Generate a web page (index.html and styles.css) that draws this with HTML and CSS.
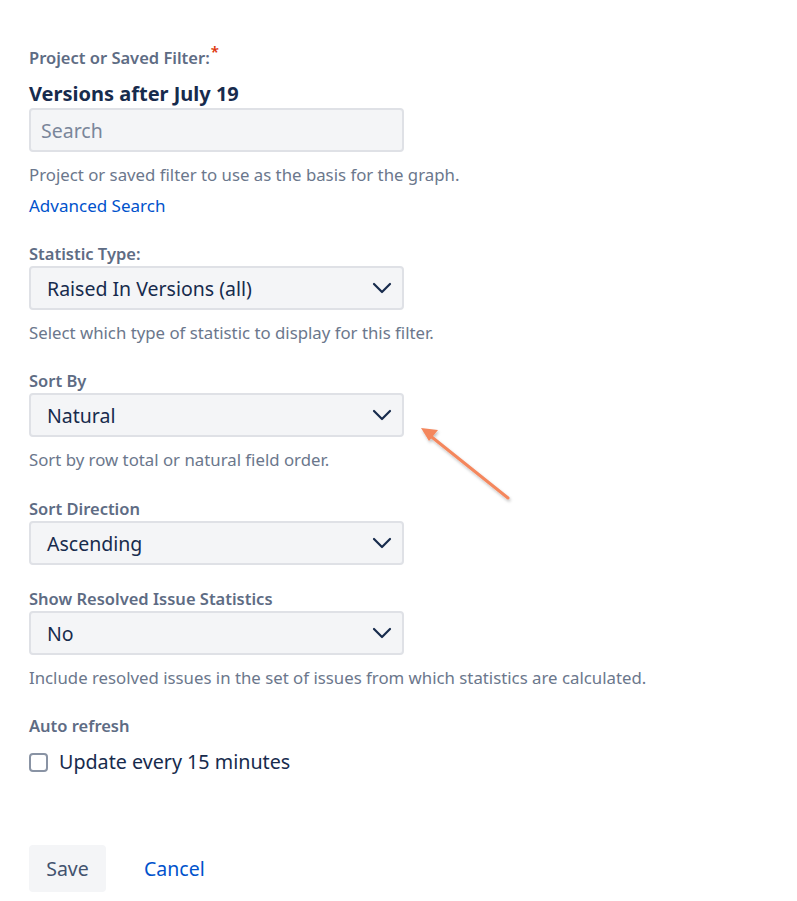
FILE: index.html
```html
<!DOCTYPE html>
<html>
<head>
<meta charset="utf-8">
<link rel="stylesheet" href="styles.css">
</head>
<body>
<form class="form">
  <div class="field">
    <label class="label">Project or Saved Filter:<span class="req">*</span></label>
    <div class="filter-name">Versions after July 19</div>
    <div class="control input"><span class="placeholder">Search</span></div>
    <div class="help">Project or saved filter to use as the basis for the graph.</div>
    <a class="link" href="#">Advanced Search</a>
  </div>

  <div class="field">
    <label class="label">Statistic Type:</label>
    <div class="control select"><span>Raised In Versions (all)</span><svg class="chev" viewBox="0 0 20 12"><path d="M2 2 L10 10 L18 2" /></svg></div>
    <div class="help">Select which type of statistic to display for this filter.</div>
  </div>

  <div class="field wide">
    <label class="label">Sort By</label>
    <div class="control select"><span>Natural</span><svg class="chev" viewBox="0 0 20 12"><path d="M2 2 L10 10 L18 2" /></svg></div>
    <div class="help">Sort by row total or natural field order.</div>
  </div>

  <div class="field short">
    <label class="label">Sort Direction</label>
    <div class="control select"><span>Ascending</span><svg class="chev" viewBox="0 0 20 12"><path d="M2 2 L10 10 L18 2" /></svg></div>
  </div>

  <div class="field">
    <label class="label">Show Resolved Issue Statistics</label>
    <div class="control select"><span>No</span><svg class="chev" viewBox="0 0 20 12"><path d="M2 2 L10 10 L18 2" /></svg></div>
    <div class="help">Include resolved issues in the set of issues from which statistics are calculated.</div>
  </div>

  <div class="field">
    <label class="label">Auto refresh</label>
    <div class="check-row"><span class="checkbox"></span><span>Update every 15 minutes</span></div>
  </div>

  <div class="buttons">
    <button type="button" class="btn">Save</button>
    <a class="cancel" href="#">Cancel</a>
  </div>
</form>

<svg class="arrow" width="120" height="100" viewBox="0 0 120 100">
  <defs>
    <filter id="sh" x="-20%" y="-20%" width="140%" height="140%">
      <feDropShadow dx="1" dy="2" stdDeviation="1.5" flood-color="#000" flood-opacity="0.25"/>
    </filter>
  </defs>
  <g filter="url(#sh)">
    <line x1="97" y1="83" x2="17" y2="19" stroke="#f4875d" stroke-width="3" stroke-linecap="round"/>
    <polygon points="10,13 27,15 18,26" fill="#f4875d"/>
  </g>
</svg>
</body>
</html>
```

FILE: styles.css
```css
html, body {
  margin: 0;
  padding: 0;
  background: #ffffff;
}

body {
  font-family: "Noto Sans", "Open Sans", "Liberation Sans", sans-serif;
  color: #172b4d;
  position: relative;
  width: 797px;
  height: 901px;
  overflow: hidden;
}

.form {
  padding: 46px 0 0 29px;
  display: flex;
  flex-direction: column;
}

.field {
  display: flex;
  flex-direction: column;
  margin-bottom: 24px;
}

.field.wide {
  margin-bottom: 25px;
}

.field.short {
  margin-bottom: 22px;
}

.label {
  font-size: 16.5px;
  font-weight: 600;
  color: #5e6c84;
  line-height: 24px;
}

.req {
  color: #de350b;
  font-size: 15px;
  position: relative;
  top: -7px;
  margin-left: 1px;
}

.filter-name {
  font-size: 20px;
  font-weight: 700;
  color: #172b4d;
  line-height: 28px;
  margin-top: 10px;
}

.control {
  box-sizing: border-box;
  width: 375px;
  height: 44px;
  background: #f4f5f7;
  border: 2px solid #dfe1e6;
  border-radius: 4px;
  display: flex;
  align-items: center;
  font-size: 19.5px;
  color: #172b4d;
}

.input {
  padding-left: 10px;
}

.placeholder {
  color: #7a869a;
}

.select {
  padding: 0 10px 0 16px;
  justify-content: space-between;
}

.chev {
  width: 20px;
  height: 12px;
  fill: none;
  stroke: #172b4d;
  stroke-width: 2.2;
  stroke-linecap: round;
  stroke-linejoin: round;
}

.help {
  font-size: 16.8px;
  color: #6b778c;
  line-height: 24px;
  margin-top: 11px;
}

.link {
  font-size: 17px;
  color: #0052cc;
  text-decoration: none;
  line-height: 24px;
  margin-top: 7px;
  align-self: flex-start;
}

.check-row {
  display: flex;
  align-items: center;
  gap: 11px;
  font-size: 19.7px;
  line-height: 28px;
  color: #172b4d;
  margin-top: 10px;
}

.checkbox {
  box-sizing: border-box;
  width: 19px;
  height: 19px;
  border: 2px solid #8993a4;
  border-radius: 4px;
  background: #ffffff;
}

.buttons {
  display: flex;
  align-items: center;
  gap: 38px;
  margin-top: 45px;
}

.btn {
  font-family: inherit;
  font-size: 19.5px;
  color: #42526e;
  background: #f4f5f7;
  border: none;
  border-radius: 4px;
  width: 77px;
  height: 47px;
  padding: 0;
}

.cancel {
  font-size: 19.5px;
  color: #0052cc;
  text-decoration: none;
}

.arrow {
  position: absolute;
  left: 411px;
  top: 415px;
}
```
